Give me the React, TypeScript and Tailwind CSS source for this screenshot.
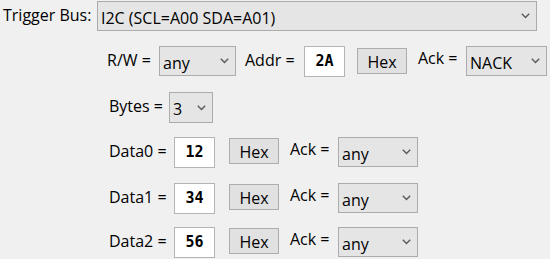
import type { ReactNode } from 'react';

function Chevron() {
  return (
    <svg width="9" height="6" viewBox="0 0 9 6" className="shrink-0">
      <polyline points="0.8,0.8 4.5,4.5 8.2,0.8" fill="none" stroke="#5a5a5a" strokeWidth="1.4" />
    </svg>
  );
}

function Combo({ value, className }: { value: string; className: string }) {
  return (
    <div className={`flex items-center justify-between border border-[#acacac] bg-[#e5e5e5] pl-[3px] pr-[6px] ${className}`}>
      <span className="pt-[3px]">{value}</span>
      <Chevron />
    </div>
  );
}

function HexInput({ value }: { value: string }) {
  return (
    <div className="flex h-[31px] w-[41px] items-center justify-center border border-[#b4b4b4] bg-white font-['DejaVu_Sans_Mono',monospace] text-[15px] font-bold">
      {value}
    </div>
  );
}

function HexButton({ className }: { className: string }) {
  return (
    <div className={`flex h-[26px] w-[50px] items-center justify-center border border-[#adadad] bg-[#e1e1e1] pt-[1px] ${className}`}>
      Hex
    </div>
  );
}

function Label({ children, className }: { children: ReactNode; className: string }) {
  return <div className={`shrink-0 leading-[22px] ${className}`}>{children}</div>;
}

function DataRow({ name, value, className }: { name: string; value: string; className: string }) {
  return (
    <div className={`flex items-start pl-[109px] ${className}`}>
      <Label className="w-[65px] pt-[3px]">{name} =</Label>
      <HexInput value={value} />
      <HexButton className="ml-[14px] mt-[1px]" />
      <Label className="ml-[11px] w-[48px] pt-[1px]">Ack =</Label>
      <Combo value="any" className="h-[30px] w-[80px]" />
    </div>
  );
}

export default function App() {
  return (
    <div className="h-[259px] w-[550px] overflow-hidden bg-[#f0f0f0] font-['Open_Sans',sans-serif] text-[16px] text-black">
      <div className="flex items-start pt-[1px]">
        <Label className="w-[97px] pl-[3px] pt-[3px]">Trigger Bus:</Label>
        <Combo value="I2C (SCL=A00 SDA=A01)" className="h-[30px] w-[440px]" />
      </div>

      <div className="mt-[15px] flex items-start pl-[107px]">
        <Label className="w-[52px] pt-[3px]">R/W =</Label>
        <Combo value="any" className="h-[30px] w-[77px]" />
        <Label className="ml-[9px] w-[59px] pt-[3px]">Addr =</Label>
        <HexInput value="2A" />
        <HexButton className="ml-[12px] mt-[2px]" />
        <Label className="ml-[11px] w-[48px] pt-[1px]">Ack =</Label>
        <Combo value="NACK" className="h-[30px] w-[81px]" />
      </div>

      <div className="mt-[15px] flex items-start pl-[109px]">
        <Label className="w-[60px] pt-[3px]">Bytes =</Label>
        <Combo value="3" className="h-[31px] w-[44px]" />
      </div>

      <DataRow name="Data0" value="12" className="mt-[14px]" />
      <DataRow name="Data1" value="34" className="mt-[15px]" />
      <DataRow name="Data2" value="56" className="mt-[13px]" />
    </div>
  );
}
